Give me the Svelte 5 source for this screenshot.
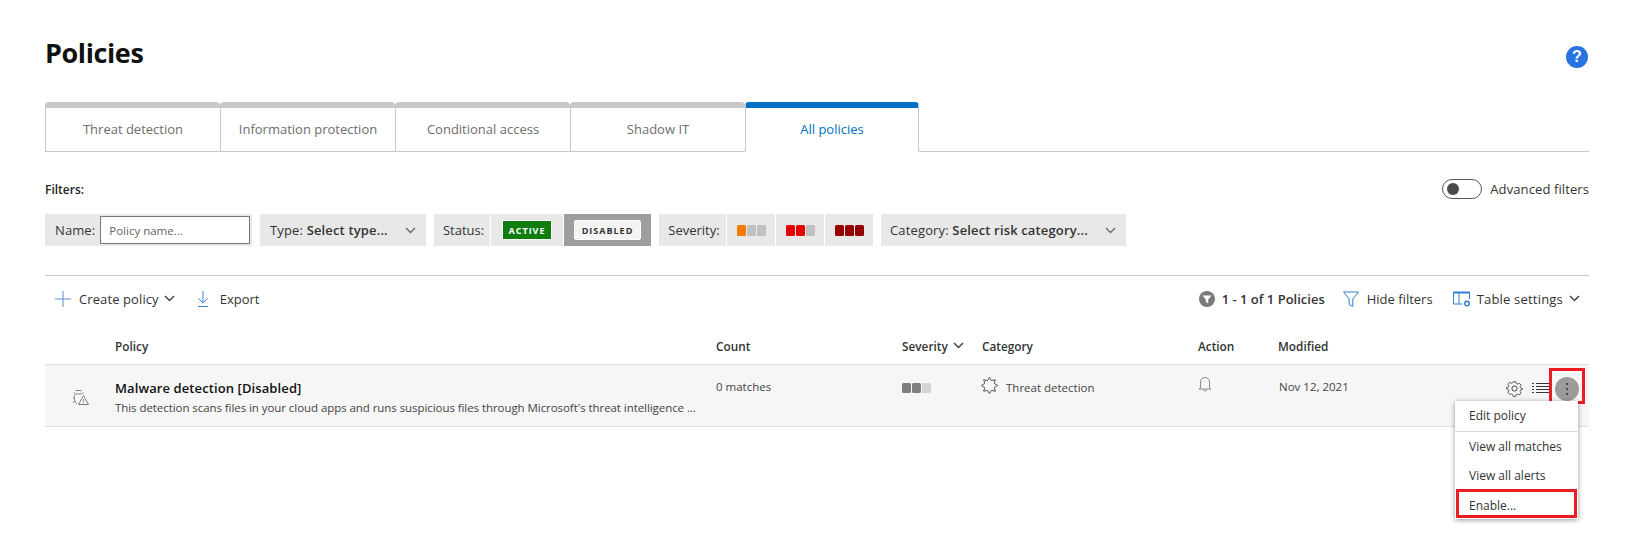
<script>
  const tabs = ["Threat detection", "Information protection", "Conditional access", "Shadow IT", "All policies"];
  let activeTab = 4;
  const columns = ["", "Policy", "Count", "Severity", "Category", "Action", "Modified"];

  // jagged outline used by the category icon
  const star = (c, outer, inner, n) => {
    const pts = [];
    for (let i = 0; i < n * 2; i++) {
      const r = i % 2 ? inner : outer;
      const a = (Math.PI * i) / n - Math.PI / 2;
      pts.push((c + r * Math.cos(a)).toFixed(2) + "," + (c + r * Math.sin(a)).toFixed(2));
    }
    return pts.join(" ");
  };
</script>

<div class="page">
  <header class="title-row">
    <h1>Policies</h1>
    <span class="help">?</span>
  </header>

  <nav class="tabs">
    {#each tabs as tab, i}
      <button class="tab" class:active={i === activeTab} onclick={() => (activeTab = i)}>{tab}</button>
    {/each}
  </nav>

  <div class="filters-head">
    <strong>Filters:</strong>
    <div class="advanced">
      <span class="toggle"><span class="knob"></span></span>
      Advanced filters
    </div>
  </div>

  <div class="filters">
    <div class="group name">
      <label for="policy-name">Name:</label>
      <input id="policy-name" placeholder="Policy name..." />
    </div>
    <div class="group select type">
      <span>Type: <b>Select type...</b></span>
      <svg class="chev" width="11" height="7" viewBox="0 0 11 7"><path d="M1 1l4.5 4.5L10 1" /></svg>
    </div>
    <div class="group status">
      <span class="cell status-label">Status:</span>
      <span class="cell active-cell"><span class="badge on">ACTIVE</span></span>
      <span class="cell disabled-cell"><span class="badge off">DISABLED</span></span>
    </div>
    <div class="group severity">
      <span class="cell sev-label">Severity:</span>
      <span class="cell sev"><i class="orange"></i><i></i><i></i></span>
      <span class="cell sev"><i class="red"></i><i class="red"></i><i></i></span>
      <span class="cell sev"><i class="dark"></i><i class="dark"></i><i class="dark"></i></span>
    </div>
    <div class="group select category">
      <span>Category: <b>Select risk category...</b></span>
      <svg class="chev" width="11" height="7" viewBox="0 0 11 7"><path d="M1 1l4.5 4.5L10 1" /></svg>
    </div>
  </div>

  <div class="toolbar">
    <div class="tools-left">
      <span class="tool plus-tool">
        <svg width="16" height="16" viewBox="0 0 16 16"><path d="M8 0v16M0 8h16" stroke="#5b8fd6" /></svg>
        <span>Create policy</span>
        <svg class="chev dark-chev" width="11" height="7" viewBox="0 0 11 7"><path d="M1 1l4.5 4.5L10 1" /></svg>
      </span>
      <span class="tool export-tool">
        <svg width="12" height="16" viewBox="0 0 12 16"><path d="M6 0v12M1.500 7.500L6 12l4.500-4.500M1 15.500h10" stroke="#3f86d8" fill="none" /></svg>
        Export
      </span>
    </div>
    <div class="tools-right">
      <span class="count">
        <svg width="16" height="16" viewBox="0 0 16 16"><circle cx="8" cy="8" r="8" fill="#7a7a7a" /><path d="M3.500 4.500h9L9.200 8.500v4L6.800 11V8.500z" fill="#fff" /></svg>
        1 - 1 of 1 Policies
      </span>
      <span class="tool hide-tool">
        <svg width="16" height="16" viewBox="0 0 16 16"><path d="M.5 1h15L9.800 8v7.500l-3.600-2V8z" fill="none" stroke="#2f7fd6" /></svg>
        Hide filters
      </span>
      <span class="tool table-tool">
        <svg width="18" height="16" viewBox="0 0 18 16" fill="none" stroke="#2f7fd6">
          <path d="M.5 1.500h16" stroke-width="2" />
          <path d="M.5 1v12h9M16.500 1v7M6 2v11" />
          <circle cx="14" cy="12.500" r="2.300" stroke-width="1.400" />
        </svg>
        <span>Table settings</span>
        <svg class="chev dark-chev" width="11" height="7" viewBox="0 0 11 7"><path d="M1 1l4.500 4.500L10 1" /></svg>
      </span>
    </div>
  </div>

  <div class="table">
    <div class="thead">
      {#each columns as col}
        <div class="th">
          {col}
          {#if col === "Severity"}
            <svg class="chev dark-chev" width="11" height="7" viewBox="0 0 11 7"><path d="M1 1l4.500 4.500L10 1" /></svg>
          {/if}
        </div>
      {/each}
    </div>

    <div class="row">
      <div class="row-icon">
        <svg width="17" height="16" viewBox="0 0 17 16" fill="none" stroke="#808080">
          <path d="M3.500 1.500h6M1.500 3.500C3 5 4 5 6.500 5S10 5 11.500 3.500" />
          <path d="M3 5.500C1.500 8 2 12 5 15M1 9h1.500M1 14l2-2" />
          <path d="M11.500 6.500l5 9h-10z" />
          <path d="M11.500 10v2.500M11.500 13.500v1" />
        </svg>
      </div>
      <div class="policy">
        <div class="policy-name">Malware detection [Disabled]</div>
        <div class="policy-desc">This detection scans files in your cloud apps and runs suspicious files through Microsoft's threat intelligence ...</div>
      </div>
      <div class="td">0 matches</div>
      <div class="td row-sev"><i></i><i></i><i></i></div>
      <div class="td cat">
        <svg width="17" height="17" viewBox="0 0 17 17" fill="none" stroke="#555">
          <polygon points={star(8.5, 8.2, 5.2, 8)} />
        </svg>
        Threat detection
      </div>
      <div class="td bell">
        <svg width="14" height="16" viewBox="0 0 14 16" fill="none" stroke="#8a8a8a">
          <path d="M2.500 12V6a4.500 4.500 0 0 1 9 0v6l1.500 1H1zM5.500 13.500a1.500 1.500 0 0 0 3 0" />
        </svg>
      </div>
      <div class="td date">Nov 12, 2021</div>
      <div class="actions">
        <svg class="gear" width="17" height="17" viewBox="0 0 17 17" fill="none" stroke="#444">
          <circle cx="8.500" cy="8.500" r="2.600" />
          <path d="M7 .8h3l.5 2.100 1.600.7 1.900-1.100 2 2.200-1.200 1.800.6 1.600 2.100.4v-.1 1.500l-2.100.6-.6 1.500 1.100 1.900-2 2.100-1.900-1.200-1.600.7-.5 2H7l-.5-2-1.600-.7L3 15.200l-2-2.100 1.100-1.900-.6-1.500L-.6 9.100V7.500l2.100-.4.600-1.600L.9 3.700l2-2.200L4.900 2.600l1.600-.7z" transform="translate(1 1) scale(.88)" />
        </svg>
        <svg width="17" height="11" viewBox="0 0 17 11" stroke="#333">
          <path d="M4 .5h13M4 3.500h13M4 6.500h13M4 9.500h13M0 .5h2M0 3.500h2M0 6.500h2M0 9.500h2" />
        </svg>
        <span class="kebab"><i></i><i></i><i></i></span>
        <span class="mark kebab-mark"></span>
        <div class="menu">
          <div class="item first">Edit policy</div>
          <div class="item">View all matches</div>
          <div class="item">View all alerts</div>
          <div class="item enable">Enable...</div>
          <span class="mark enable-mark"></span>
        </div>
      </div>
    </div>
  </div>
</div>

<style>
  :global(body) {
    margin: 0;
    background: #fff;
  }

  .page {
    min-height: 553px;
    box-sizing: border-box;
    padding: 35px 40px 0 45px;
    font-family: "Open Sans", "Noto Sans", sans-serif;
    font-size: 13px;
    color: #333;
  }

  .title-row {
    display: flex;
    justify-content: space-between;
    align-items: center;
    height: 34px;
    margin-bottom: 33px;
  }

  h1 {
    margin: 0;
    font-size: 27px;
    font-weight: 700;
    color: #111;
    letter-spacing: -0.4px;
  }

  .help {
    width: 22px;
    height: 22px;
    margin: 10px 1px 0 0;
    border-radius: 50%;
    background: #2674e4;
    color: #fff;
    font-family: "Liberation Sans", sans-serif;
    font-weight: 700;
    font-size: 16px;
    line-height: 22px;
    text-align: center;
  }

  .tabs {
    display: flex;
    height: 50px;
    border-bottom: 1px solid #c8c8c8;
    box-sizing: border-box;
  }

  .tab {
    width: 175px;
    height: 50px;
    padding: 0 0 2px;
    box-sizing: border-box;
    background: #fff;
    border: 1px solid #c8c8c8;
    border-right-width: 0;
    border-top: 6px solid #c8c8c8;
    border-radius: 4px 4px 0 0;
    font: inherit;
    color: #6e6e6e;
  }

  .tab.active {
    width: 174px;
    border-top-color: #0072c6;
    border-right-width: 1px;
    border-bottom-color: #fff;
    color: #0072c6;
  }

  .filters-head {
    display: flex;
    justify-content: space-between;
    align-items: center;
    height: 20px;
    margin-top: 27px;
    font-size: 12px;
  }

  .filters-head strong {
    font-weight: 600;
    color: #222;
  }

  .advanced {
    display: flex;
    align-items: center;
    gap: 8px;
    font-size: 13px;
    letter-spacing: 0.1px;
  }

  .toggle {
    display: block;
    width: 40px;
    height: 20px;
    box-sizing: border-box;
    border: 1px solid #555;
    border-radius: 10px;
    padding: 3px 4px;
  }

  .knob {
    display: block;
    width: 12px;
    height: 12px;
    border-radius: 50%;
    background: #4a4a4a;
  }

  .filters {
    display: flex;
    gap: 8px;
    height: 32px;
    margin-top: 15px;
  }

  .group {
    display: flex;
    align-items: center;
    background: #e8e8e8;
    box-sizing: border-box;
  }

  .name {
    width: 207px;
    padding-left: 10px;
    gap: 5px;
    letter-spacing: 0.1px;
  }

  input {
    width: 150px;
    height: 28px;
    box-sizing: border-box;
    border: 1px solid #777;
    background: #fff;
    padding: 0 8px;
    font: inherit;
    font-size: 11.500px;
    outline: none;
  }

  input::placeholder {
    color: #666;
    opacity: 1;
  }

  .select {
    justify-content: space-between;
    padding: 0 10px;
    letter-spacing: 0.15px;
  }

  .select b {
    font-weight: 600;
  }

  .type {
    width: 166px;
  }

  .category {
    width: 245px;
    padding-left: 9px;
  }

  .chev {
    fill: none;
    stroke: #666;
    stroke-width: 1.300;
    flex: none;
  }

  .dark-chev {
    stroke: #444;
    stroke-width: 1.500;
  }

  .status {
    width: 217px;
    background: transparent;
    gap: 1px;
    align-items: stretch;
  }

  .cell {
    display: flex;
    align-items: center;
    justify-content: center;
    background: #e8e8e8;
    box-sizing: border-box;
  }

  .status-label {
    width: 56px;
    padding-left: 3px;
  }

  .active-cell {
    width: 72px;
  }

  .disabled-cell {
    width: 87px;
    background: #9e9e9e;
  }

  .badge {
    display: flex;
    align-items: center;
    justify-content: center;
    height: 20px;
    box-sizing: border-box;
    font-size: 9px;
    font-weight: 700;
    letter-spacing: 1px;
  }

  .on {
    width: 50px;
    background: #107c10;
    color: #fff;
    border: 1px solid #fff;
  }

  .off {
    width: 67px;
    background: #f4f4f4;
    color: #333;
    border: 1px solid #fff;
    border-radius: 2px;
  }

  .severity {
    width: 214px;
    background: transparent;
    gap: 1px;
    align-items: stretch;
  }

  .sev-label {
    width: 67px;
    padding-left: 3px;
  }

  .sev {
    flex: 1;
    gap: 1px;
  }

  .sev i,
  .row-sev i {
    display: block;
    width: 9px;
    height: 11px;
    border-radius: 1.500px;
    background: #c0c0c0;
  }

  .sev .orange {
    background: #f47a00;
  }

  .sev .red {
    background: #e60000;
  }

  .sev .dark {
    background: #960000;
  }

  .toolbar {
    display: flex;
    justify-content: space-between;
    align-items: center;
    height: 46px;
    margin-top: 29px;
    padding: 0 9px 0 10px;
    border-top: 1px solid #c8c8c8;
    box-sizing: border-box;
  }

  .tools-left,
  .tools-right {
    display: flex;
    align-items: center;
  }

  .tools-left {
    gap: 22px;
  }

  .tools-right {
    gap: 20px;
  }

  .tool,
  .count {
    display: flex;
    align-items: center;
    gap: 8px;
    white-space: nowrap;
  }

  .plus-tool {
    letter-spacing: 0.1px;
  }

  .plus-tool .chev {
    margin-left: -3px;
  }

  .export-tool {
    gap: 11px;
  }

  .count {
    gap: 7px;
    margin-right: -2px;
    font-weight: 600;
  }

  .table-tool {
    gap: 6px;
    letter-spacing: 0.2px;
  }

  .table {
    margin-top: 16px;
    font-size: 12px;
  }

  .thead,
  .row {
    display: grid;
    grid-template-columns: 70px 601px 186px 79px 217px 80px 1fr;
  }

  .thead {
    height: 27px;
  }

  .th {
    display: flex;
    align-items: flex-start;
    gap: 2px;
    font-size: 11.800px;
    font-weight: 600;
    color: #333;
    line-height: 18px;
  }

  .th:nth-child(5) {
    padding-left: 1px;
  }

  .th .chev {
    margin-top: 5px;
    margin-left: 3px;
  }

  .row {
    position: relative;
    height: 63px;
    box-sizing: border-box;
    background: #f6f6f6;
    border-top: 1px solid #dedede;
    border-bottom: 1px solid #dedede;
  }

  .row-icon {
    padding: 24px 0 0 27px;
  }

  .policy-name {
    margin-top: 14px;
    font-size: 13px;
    font-weight: 600;
    color: #111;
    line-height: 18px;
    letter-spacing: 0.1px;
  }

  .policy-desc {
    margin-top: 3px;
    font-size: 11.500px;
    line-height: 16px;
    color: #444;
    white-space: nowrap;
    letter-spacing: -0.065px;
  }

  .td {
    padding-top: 13px;
    line-height: 18px;
    font-size: 11.500px;
    color: #444;
  }

  .date {
    padding-left: 1px;
  }

  .row-sev {
    display: flex;
    gap: 1px;
    padding-top: 18px;
  }

  .row-sev i {
    height: 10px;
    background: #7f7f7f;
  }

  .row-sev i:last-child {
    background: #d4d4d4;
  }

  .cat {
    display: flex;
    align-items: flex-start;
    gap: 8px;
    padding-top: 12px;
    line-height: 22px;
  }

  .bell {
    padding-top: 11px;
  }

  .actions {
    position: absolute;
    top: 0;
    right: 10px;
    height: 100%;
    display: flex;
    align-items: center;
    gap: 6px;
  }

  .actions > svg {
    margin-top: -14px;
  }

  .actions > .gear {
    margin-right: 3px;
    overflow: visible;
  }

  .kebab {
    display: flex;
    flex-direction: column;
    align-items: center;
    justify-content: center;
    gap: 3px;
    width: 24px;
    height: 24px;
    margin-top: -14px;
    border-radius: 50%;
    background: #9b9b9b;
  }

  .kebab i {
    display: block;
    width: 2px;
    height: 2px;
    background: #4a4a4a;
  }

  .mark {
    position: absolute;
    box-sizing: border-box;
    border: 3px solid #ed1c24;
  }

  .kebab-mark {
    top: 3px;
    right: -6px;
    width: 36px;
    height: 36px;
  }

  .menu {
    position: absolute;
    top: 36px;
    right: 1px;
    width: 123px;
    height: 118px;
    box-sizing: border-box;
    background: #fff;
    box-shadow: 0 1px 5px rgba(0, 0, 0, 0.4);
    z-index: 2;
  }

  .item {
    height: 29px;
    padding-left: 14px;
    line-height: 29px;
    font-size: 12px;
    color: #333;
    white-space: nowrap;
  }

  .first {
    height: 31px;
    padding-top: 0;
    box-sizing: border-box;
    border-bottom: 1px solid #dcdcdc;
  }

  .enable {
    line-height: 31px;
  }

  .enable-mark {
    left: 1px;
    right: 1px;
    bottom: 1px;
    height: 29px;
  }
</style>
